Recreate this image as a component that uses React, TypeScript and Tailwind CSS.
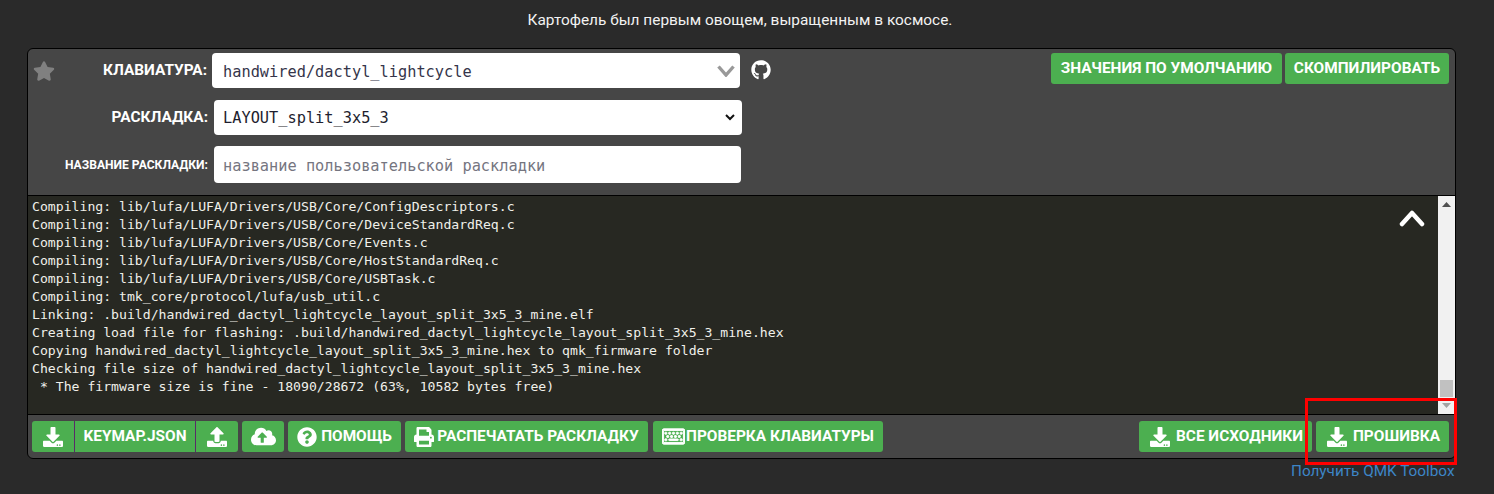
import { FaCloudUploadAlt, FaDownload, FaGithub, FaPrint, FaQuestionCircle, FaRegKeyboard, FaStar, FaUpload } from "react-icons/fa";
import type { ReactNode } from "react";

const log = [
  "Compiling: lib/lufa/LUFA/Drivers/USB/Core/ConfigDescriptors.c",
  "Compiling: lib/lufa/LUFA/Drivers/USB/Core/DeviceStandardReq.c",
  "Compiling: lib/lufa/LUFA/Drivers/USB/Core/Events.c",
  "Compiling: lib/lufa/LUFA/Drivers/USB/Core/HostStandardReq.c",
  "Compiling: lib/lufa/LUFA/Drivers/USB/Core/USBTask.c",
  "Compiling: tmk_core/protocol/lufa/usb_util.c",
  "Linking: .build/handwired_dactyl_lightcycle_layout_split_3x5_3_mine.elf",
  "Creating load file for flashing: .build/handwired_dactyl_lightcycle_layout_split_3x5_3_mine.hex",
  "Copying handwired_dactyl_lightcycle_layout_split_3x5_3_mine.hex to qmk_firmware folder",
  "Checking file size of handwired_dactyl_lightcycle_layout_split_3x5_3_mine.hex",
  " * The firmware size is fine - 18090/28672 (63%, 10582 bytes free)",
];

function Btn({ children, className }: { children: ReactNode; className: string }) {
  return (
    <button className={`flex h-[31px] items-center justify-center rounded-[3px] bg-[#4caf50] text-[15.4px] font-bold whitespace-nowrap text-white ${className}`}>
      {children}
    </button>
  );
}

export default function App() {
  return (
    <div className="h-[494px] w-[1494px] overflow-hidden bg-[#2a2a2a] font-['Roboto',sans-serif] text-white">
      <div className="flex h-[48px] justify-center pt-[11px] pr-[14px] text-[15.4px] leading-[18px] text-[#f2f2f2]">
        Картофель был первым овощем, выращенным в космосе.
      </div>

      <div className="relative ml-[27px] flex h-[411px] w-[1429px] flex-col overflow-hidden rounded-[6px] border border-black bg-[#464646]">
        {/* controls */}
        <div className="flex h-[147px] flex-col border-b border-black">
          <div className="flex h-[51px] items-start pt-[4px] pr-[6px]">
            <div className="flex h-[35px] w-[179px] items-center justify-between pl-[5px]">
              <FaStar className="text-[#808080]" size={22} />
              <span className="text-[15.4px] font-bold">КЛАВИАТУРА:</span>
            </div>
            <div className="ml-[5px] flex h-[35px] w-[528px] items-center justify-between rounded-[4px] bg-white pr-[5px] pl-[11px] font-['DejaVu_Sans_Mono',monospace] text-[15.3px] text-[#35354a]">
              <span className="pt-[3px]">handwired/dactyl_lightcycle</span>
              <svg width="18" height="12" viewBox="0 0 18 12" fill="none" stroke="#999" strokeWidth="3.4">
                <path d="M1.5 1.5 9 10l7.5-8.500" />
              </svg>
            </div>
            <FaGithub className="mt-[7px] ml-[11px]" size={20} />
            <div className="ml-auto flex gap-[3px]">
              <Btn className="h-[30px] w-[231px]">ЗНАЧЕНИЯ ПО УМОЛЧАНИЮ</Btn>
              <Btn className="h-[30px] w-[164px]">СКОМПИЛИРОВАТЬ</Btn>
            </div>
          </div>
          <div className="flex h-[46px] items-start">
            <div className="flex h-[35px] w-[180px] items-center justify-end pt-[1px] text-[15.4px] font-bold">РАСКЛАДКА:</div>
            <div className="ml-[6px] flex h-[35px] w-[528px] items-center justify-between rounded-[4px] bg-white pr-[7px] pl-[9px] font-['DejaVu_Sans_Mono',monospace] text-[15.3px] text-[#1e1e2e]">
              <span className="pt-[2px]">LAYOUT_split_3x5_3</span>
              <svg width="10" height="7" viewBox="0 0 10 7" fill="none" stroke="#111" strokeWidth="2">
                <path d="M1 1l4 4 4-4" />
              </svg>
            </div>
          </div>
          <div className="flex items-start">
            <div className="flex h-[37px] w-[180px] items-center justify-end pt-[2px] text-[12.1px] font-bold">НАЗВАНИЕ РАСКЛАДКИ:</div>
            <div className="ml-[6px] flex h-[37px] w-[527px] items-center rounded-[4px] bg-white pt-[3px] pl-[9px] font-['DejaVu_Sans_Mono',monospace] text-[15.3px] text-[#75757f]">
              название пользовательской раскладки
            </div>
          </div>
        </div>

        {/* terminal */}
        <div className="flex h-[219px] border-b border-black bg-[#272822]">
          <pre className="flex-1 pt-[2px] pl-[4px] font-['DejaVu_Sans_Mono',monospace] text-[13.15px] leading-[18px] text-[#f0f0ea]">
            {log.join("\n")}
          </pre>
          <div className="flex w-[17px] flex-col items-center justify-between bg-[#f1f1f1]">
            <svg className="mt-[6px]" width="9" height="5" viewBox="0 0 9 5"><path d="M4.500 0 9 5H0z" fill="#505050" /></svg>
            <div className="mb-[6px] flex flex-col items-center gap-[6px]">
              <div className="h-[17px] w-[13px] bg-[#c1c1c1]" />
              <svg width="9" height="5" viewBox="0 0 9 5"><path d="M0 0h9L4.500 5z" fill="#a3a3a3" /></svg>
            </div>
          </div>
        </div>

        {/* bottom buttons */}
        <div className="flex flex-1 items-start pt-[6px] pl-[4px]">
          <div className="flex">
            <Btn className="w-[42px] rounded-r-none"><FaDownload size={20} /></Btn>
            <Btn className="w-[122px] rounded-none border-x border-[#5a2a6a]">KEYMAP.JSON</Btn>
            <Btn className="w-[42px] rounded-l-none"><FaUpload size={20} /></Btn>
          </div>
          <Btn className="ml-[4px] w-[42px]"><FaCloudUploadAlt size={25} /></Btn>
          <Btn className="ml-[4px] w-[113px] gap-[4px]"><FaQuestionCircle size={20} />ПОМОЩЬ</Btn>
          <Btn className="ml-[4px] w-[243px] gap-[3px]"><FaPrint size={20} />РАСПЕЧАТАТЬ РАСКЛАДКУ</Btn>
          <Btn className="ml-[5px] w-[230px] gap-[1px]"><FaRegKeyboard size={23} stroke="currentColor" strokeWidth={24} />ПРОВЕРКА КЛАВИАТУРЫ</Btn>
          <Btn className="ml-auto w-[173px] gap-[6px] pl-[2px]"><FaDownload size={20} />ВСЕ ИСХОДНИКИ</Btn>
          <Btn className="mr-[6px] ml-[4px] w-[133px] gap-[6px] pl-[2px]"><FaDownload size={20} />ПРОШИВКА</Btn>
        </div>

        {/* scroll-to-top chevron over the log */}
        <svg className="absolute top-[160px] right-[30px]" width="26" height="18" viewBox="0 0 26 18" fill="none" stroke="#fff" strokeWidth="4.500" strokeLinecap="round" strokeLinejoin="round">
          <path d="M3 15 13 4l10 11" />
        </svg>
      </div>

      <div className="mt-[1px] ml-[1291px] w-[170px] text-[15.3px] leading-[22px] whitespace-nowrap text-[#3d85c6]">Получить QMK Toolbox</div>

      {/* annotation drawn on the screenshot */}
      <div className="absolute top-[398px] left-[1305px] h-[67px] w-[152px] border-[3px] border-[#ff0000]" />
    </div>
  );
}
